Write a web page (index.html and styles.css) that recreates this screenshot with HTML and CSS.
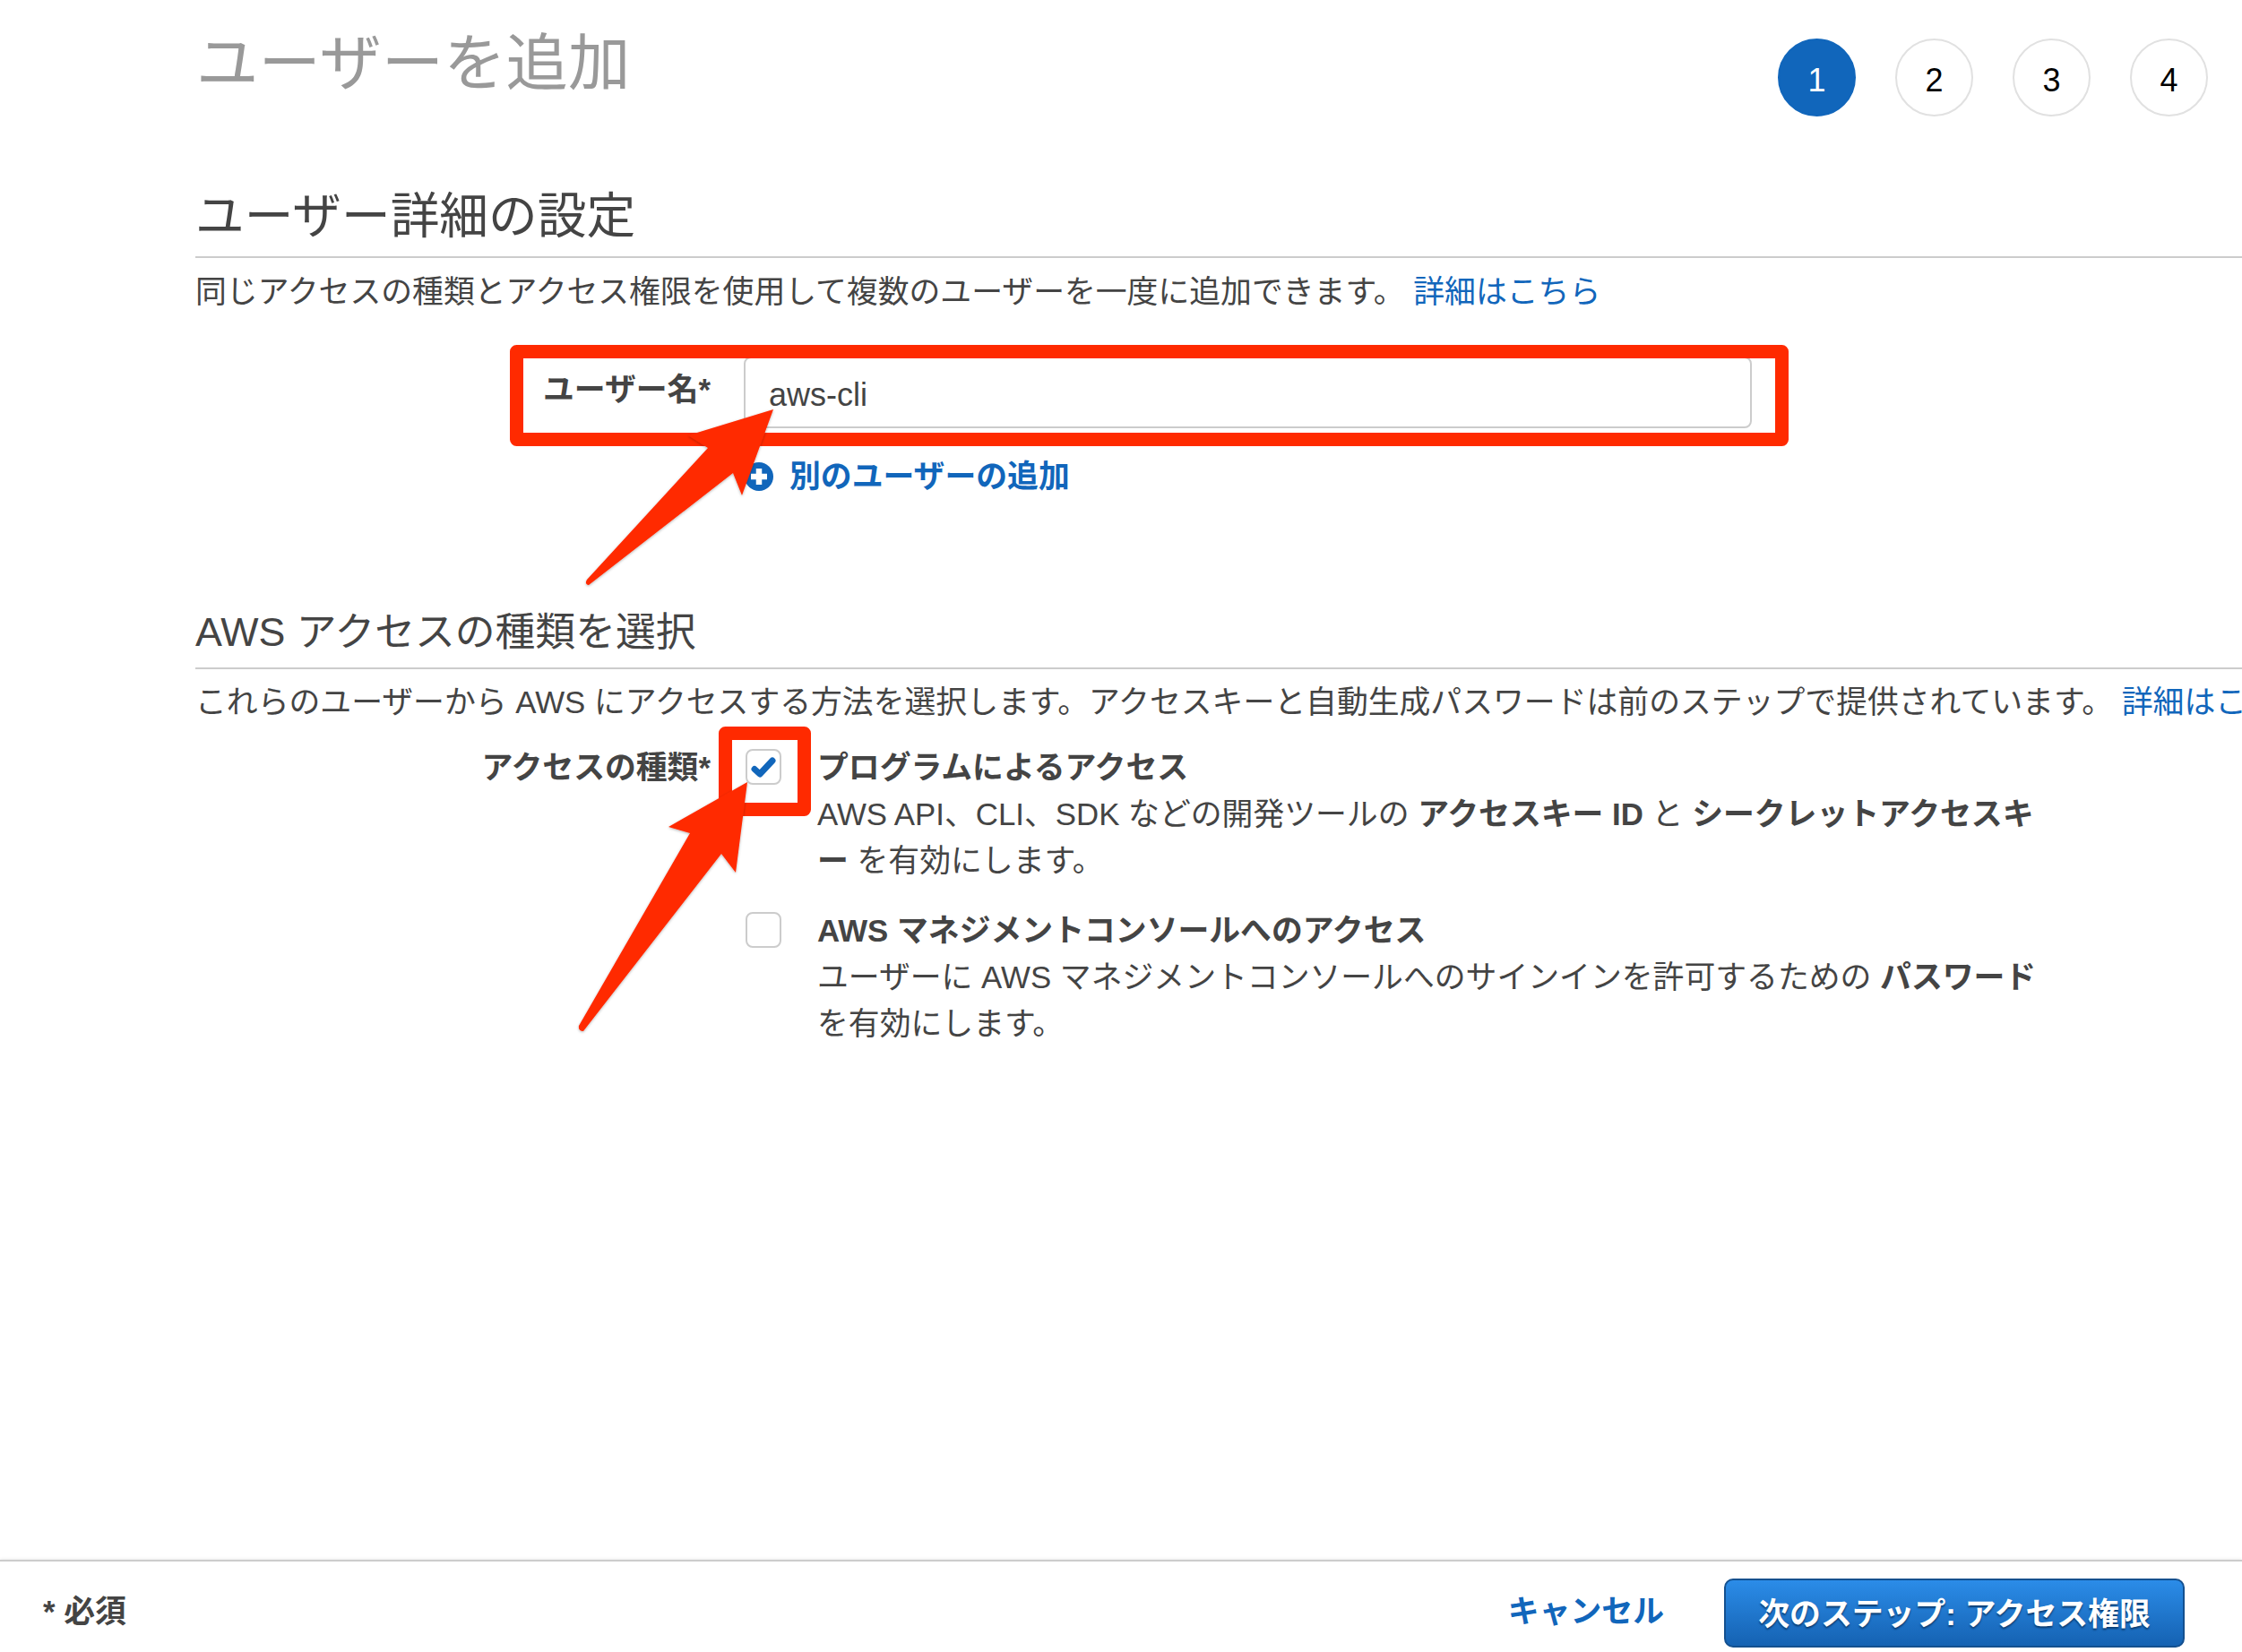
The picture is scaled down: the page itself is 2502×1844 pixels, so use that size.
FILE: index.html
```html
<!DOCTYPE html>
<html lang="ja">
<head>
<meta charset="utf-8">
<title>ユーザーを追加</title>
<link rel="stylesheet" href="styles.css">
</head>
<body>
<div class="page">
  <main class="wizard">
    <header class="wizard-head">
      <h1 class="page-title">ユーザーを追加</h1>
      <ol class="steps">
        <li class="step step-active">1</li>
        <li class="step">2</li>
        <li class="step">3</li>
        <li class="step">4</li>
      </ol>
    </header>

    <section class="block">
      <h2 class="block-title block-title-lg">ユーザー詳細の設定</h2>
      <p class="block-desc">同じアクセスの種類とアクセス権限を使用して複数のユーザーを一度に追加できます。 <a class="link" href="#">詳細はこちら</a></p>
      <div class="user-row">
        <label class="field-label" for="username">ユーザー名*</label>
        <input class="text-input" id="username" type="text" value="aws-cli">
      </div>
      <a class="add-user" href="#">
        <svg class="add-icon" viewBox="0 0 32 32" aria-hidden="true"><circle cx="16" cy="16" r="16" fill="#1166bb"/><path d="M16 7v18M7 16h18" stroke="#fff" stroke-width="6.5"/></svg>
        <span>別のユーザーの追加</span>
      </a>
    </section>

    <section class="block block-access">
      <h2 class="block-title block-title-md">AWS アクセスの種類を選択</h2>
      <p class="block-desc">これらのユーザーから AWS にアクセスする方法を選択します。アクセスキーと自動生成パスワードは前のステップで提供されています。 <a class="link" href="#">詳細はこちら</a></p>
      <div class="access-row">
        <div class="field-label">アクセスの種類*</div>
        <div class="options">
          <div class="option">
            <span class="checkbox">
              <svg class="check" viewBox="0 0 28 24" aria-hidden="true"><path d="M4 14.5L10 20L24 5" fill="none" stroke="#1166bb" stroke-width="7" stroke-linecap="round" stroke-linejoin="round"/></svg>
            </span>
            <div class="option-text">
              <strong>プログラムによるアクセス</strong><br>
              AWS API、CLI、SDK などの開発ツールの <strong>アクセスキー ID</strong> と <strong>シークレットアクセスキー</strong> を有効にします。
            </div>
          </div>
          <div class="option">
            <span class="checkbox"></span>
            <div class="option-text">
              <strong>AWS マネジメントコンソールへのアクセス</strong><br>
              ユーザーに AWS マネジメントコンソールへのサインインを許可するための <strong>パスワード</strong> を有効にします。
            </div>
          </div>
        </div>
      </div>
    </section>
  </main>

  <footer class="wizard-foot">
    <span class="required-note">* 必須</span>
    <div class="foot-actions">
      <a class="cancel" href="#">キャンセル</a>
      <button class="next-btn" type="button">次のステップ: アクセス権限</button>
    </div>
  </footer>

  <svg class="annotations" viewBox="0 0 2502 1844" aria-hidden="true">
    <defs>
      <filter id="soft" x="-10%" y="-10%" width="120%" height="120%">
        <feDropShadow dx="0" dy="1" stdDeviation="1.5" flood-color="#000" flood-opacity="0.3"/>
      </filter>
    </defs>
    <rect class="mark" x="576.5" y="392.5" width="1412" height="98"/>
    <rect class="mark" x="809.5" y="818.5" width="88" height="85"/>
    <path class="arrow" filter="url(#soft)" d="M863 457L768 486L790 500L655 647Q652 652 657 653L818 528L828 553Z"/>
    <path class="arrow" filter="url(#soft)" d="M834 873L746 923L770 930L646 1145Q645 1151 651 1151L805 953L821 974Z"/>
  </svg>
</div>
</body>
</html>
```

FILE: styles.css
```css
* {
  box-sizing: border-box;
}

html,
body {
  margin: 0;
  padding: 0;
}

body {
  background: #fff;
  color: #444;
  font-family: "Liberation Sans", "Noto Sans CJK JP", sans-serif;
  font-size: 34.85px;
  line-height: 52px;
}

.page {
  position: relative;
  display: flex;
  flex-direction: column;
  width: 2502px;
  height: 1844px;
  overflow: hidden;
}

.wizard {
  flex: 1;
}

.wizard-head {
  display: flex;
  justify-content: space-between;
  align-items: flex-start;
  height: 207px;
  padding: 27px 38px 0 219px;
}

.page-title {
  margin: 0;
  color: #999;
  font-size: 69.4px;
  font-weight: 400;
  line-height: 88px;
}

.steps {
  display: flex;
  gap: 44px;
  margin: 16px 0 0;
  padding: 0;
  list-style: none;
}

.step {
  display: flex;
  justify-content: center;
  align-items: center;
  width: 87px;
  height: 87px;
  padding-top: 7px;
  border: 2px solid #e1e1e1;
  border-radius: 50%;
  color: #000;
  font-size: 36px;
}

.step-active {
  border-color: #1166bb;
  background: #1166bb;
  color: #fff;
}

.block {
  margin-left: 218px;
}

.block-title {
  margin: 0;
  border-bottom: 2px solid #ccc;
  font-weight: 400;
}

.block-title-lg {
  padding: 2px 0 13px;
  font-size: 54.7px;
  line-height: 64px;
}

.block-title-md {
  padding: 2px 0 12px;
  font-size: 44.8px;
  line-height: 56px;
}

.block-desc {
  margin: 12px 0 0;
  white-space: nowrap;
}

.link {
  color: #1166bb;
  text-decoration: none;
}

.user-row {
  display: flex;
  margin-top: 46px;
}

.field-label {
  flex: none;
  width: 575px;
  padding-top: 11px;
  font-weight: 700;
  text-align: right;
}

.text-input {
  width: 1125px;
  height: 80px;
  margin-left: 37px;
  padding: 6px 26px 0;
  border: 2px solid #ccc;
  border-radius: 8px;
  background: #fff;
  color: #444;
  font-family: inherit;
  font-size: 36px;
}

.add-user {
  display: flex;
  align-items: center;
  gap: 18px;
  margin: 28px 0 0 613px;
  color: #1166bb;
  font-weight: 700;
  text-decoration: none;
}

.add-icon {
  flex: none;
  width: 32px;
  height: 32px;
}

.block-access {
  margin-top: 117px;
}

.block-access .block-desc {
  margin-top: 11px;
}

.access-row {
  display: flex;
  margin-top: 21px;
}

.access-row .field-label {
  padding-top: 0;
}

.options {
  display: flex;
  flex-direction: column;
  gap: 26px;
  margin-left: 39px;
}

.option {
  display: flex;
  gap: 40px;
}

.checkbox {
  display: flex;
  flex: none;
  justify-content: center;
  align-items: center;
  width: 40px;
  height: 40px;
  margin-top: 5px;
  border: 2px solid #ccc;
  border-radius: 8px;
  background: #fff;
}

.check {
  width: 28px;
  height: 24px;
}

.option-text {
  width: 1364px;
  line-break: loose;
}

.wizard-foot {
  display: flex;
  flex: none;
  justify-content: space-between;
  align-items: center;
  height: 103px;
  padding: 18px 64px 8px 48px;
  border-top: 2px solid #ccc;
  box-shadow: 0 -1px 3px rgba(0, 0, 0, 0.08);
}

.required-note {
  font-weight: 700;
}

.foot-actions {
  display: flex;
  align-items: center;
  gap: 67px;
}

.cancel {
  color: #1166bb;
  font-weight: 700;
  text-decoration: none;
}

.next-btn {
  width: 514px;
  height: 77px;
  margin-top: 4px;
  padding: 0 0 4px;
  border: 2px solid #14508f;
  border-radius: 10px;
  background: linear-gradient(#2b8ce8, #1562b2);
  color: #fff;
  font-family: inherit;
  font-size: 34.85px;
  font-weight: 700;
  text-shadow: 0 2px 2px #0b3c70;
}

.annotations {
  position: absolute;
  top: 0;
  left: 0;
  width: 2502px;
  height: 1844px;
  pointer-events: none;
}

.mark {
  fill: none;
  stroke: #ff2a00;
  stroke-width: 15;
  stroke-linejoin: round;
}

.arrow {
  fill: #ff2a00;
}
```
